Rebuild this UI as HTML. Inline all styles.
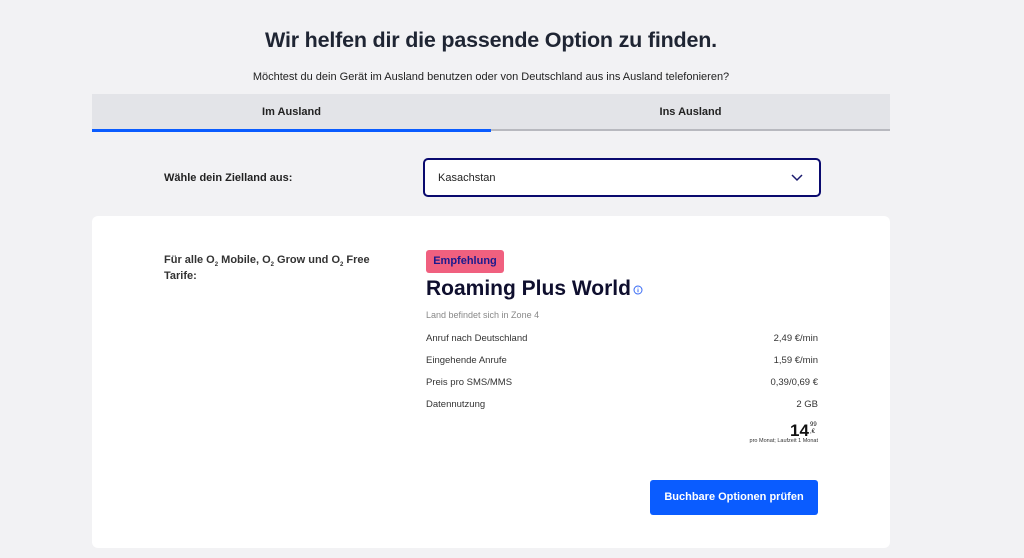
<!DOCTYPE html>
<html><head><meta charset="utf-8"><style>
*{margin:0;padding:0;box-sizing:border-box}
body{width:1024px;height:558px;background:#f2f2f4;font-family:"Liberation Sans",sans-serif;color:#1a1a2e;position:relative;overflow:hidden}
.a{position:absolute}
h1{position:absolute;top:28px;left:0;width:982px;text-align:center;font-size:21.5px;font-weight:bold;color:#1f2533;letter-spacing:-0.2px}
.sub{top:71px;left:0;width:982px;text-align:center;font-size:11px;color:#222}
.tabs{top:94px;left:92px;width:798px;height:37px;background:#e3e4e8;border-bottom:2px solid #b8b9bf}
.tab{position:absolute;top:0;height:37px;line-height:36px;width:399px;text-align:center;font-size:11px;font-weight:bold;color:#222}
.card{top:216px;left:92px;width:798px;height:332px;background:#fff;border-radius:6px}
.sel{top:158px;left:423px;width:398px;height:39px;border:2px solid #0a0a6e;border-radius:5px;background:#fff;font-size:11px;padding:12px 13px;color:#222}
.row{left:426px;width:392px;font-size:9.5px;color:#333}
.row span{position:absolute;right:0}
.s2{font-size:6px;position:relative;top:3px;line-height:0}
</style></head><body>
<h1>Wir helfen dir die passende Option zu finden.</h1>
<div class="a sub">Möchtest du dein Gerät im Ausland benutzen oder von Deutschland aus ins Ausland telefonieren?</div>
<div class="a tabs"><div class="tab" style="left:0">Im Ausland</div><div class="tab" style="left:399px">Ins Ausland</div><div class="a" style="left:0;top:35px;width:399px;height:3px;background:#0a5cff"></div></div>
<div class="a" style="top:172px;left:164px;font-size:11px;font-weight:bold;color:#222">Wähle dein Zielland aus:</div>
<div class="a sel">Kasachstan<svg class="a" style="right:16px;top:14px" width="12" height="8" viewBox="0 0 12 8"><path d="M1 1l5 5 5-5" stroke="#1a1a6e" stroke-width="1.5" fill="none"/></svg></div>
<div class="a card"></div>
<div class="a" style="top:252px;left:164px;width:240px;font-size:11px;font-weight:bold;color:#333;line-height:16px">Für alle O<span class="s2">2</span> Mobile, O<span class="s2">2</span> Grow und O<span class="s2">2</span> Free Tarife:</div>
<div class="a" style="top:250px;left:426px;width:78px;height:23px;background:#f0607f;border-radius:3px;font-size:11px;font-weight:bold;color:#1a1a8e;text-align:center;line-height:23px">Empfehlung</div>
<div class="a" style="top:277px;left:426px;font-size:21px;font-weight:bold;color:#0f0f2e">Roaming Plus World</div>
<svg class="a" style="top:285px;left:633px" width="10" height="10"><circle cx="5" cy="5" r="4" fill="none" stroke="#3a6cf5" stroke-width="1"/><path d="M5 4.3v3M5 2.6v.8" stroke="#3a6cf5" stroke-width="1"/></svg>
<div class="a" style="top:310px;left:426px;font-size:9px;color:#888">Land befindet sich in Zone 4</div>
<div class="a row" style="top:333px">Anruf nach Deutschland<span>2,49 €/min</span></div>
<div class="a row" style="top:355px">Eingehende Anrufe<span>1,59 €/min</span></div>
<div class="a row" style="top:377px">Preis pro SMS/MMS<span>0,39/0,69 €</span></div>
<div class="a row" style="top:399px">Datennutzung<span>2 GB</span></div>
<div class="a" style="top:421px;left:790px;font-size:17px;font-weight:bold;color:#111">14</div>
<div class="a" style="top:422px;left:810px;font-size:6px;color:#111;line-height:7px">99<br>,€</div>
<div class="a" style="top:438px;left:700px;width:118px;text-align:right;font-size:5.5px;color:#333">pro Monat; Laufzeit 1 Monat</div>
<div class="a" style="top:480px;left:650px;width:168px;height:35px;background:#0a5cff;border-radius:3px;color:#fff;font-size:11px;font-weight:bold;text-align:center;line-height:35px">Buchbare Optionen prüfen</div>
</body></html>
